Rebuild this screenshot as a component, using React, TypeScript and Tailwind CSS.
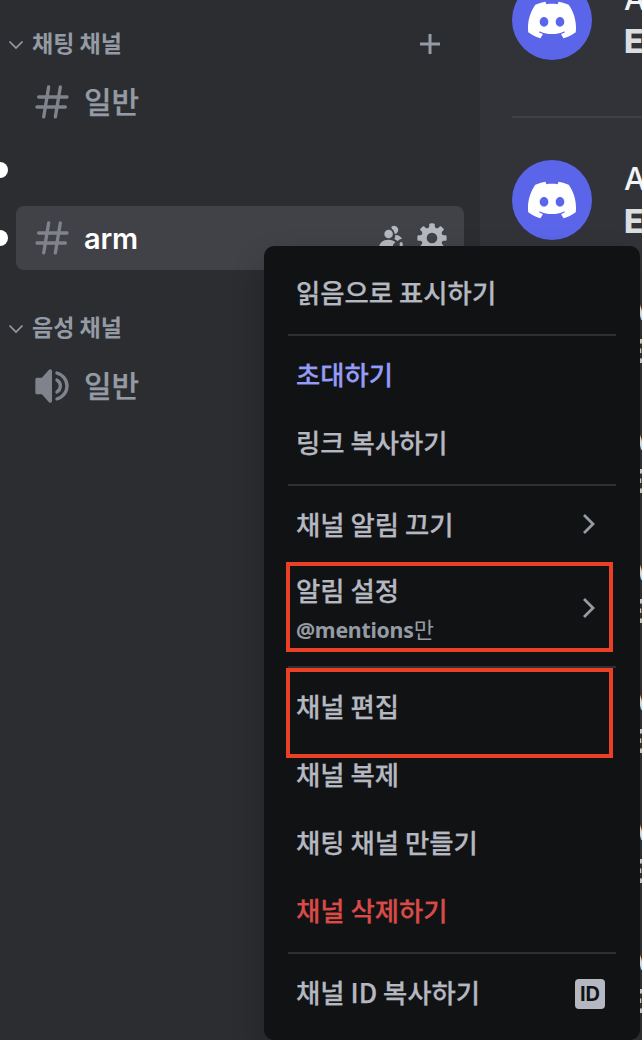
import React from "react";
import { SiDiscord } from "react-icons/si";

const KR = "font-['Noto_Sans_CJK_KR','Noto_Sans',sans-serif]";

function Hash() {
  return (
    <svg viewBox="0 0 24 24" className="size-10 shrink-0 fill-[#81838c]">
      <path
        fillRule="evenodd"
        d="M10.99 3.16A1 1 0 1 0 9 2.84L8.15 8H4a1 1 0 0 0 0 2h3.82l-.67 4H3a1 1 0 1 0 0 2h3.82l-.8 4.84a1 1 0 0 0 1.97.32L8.85 16h4.97l-.8 4.84a1 1 0 0 0 1.97.32l.86-5.16H20a1 1 0 1 0 0-2h-3.82l.67-4H21a1 1 0 1 0 0-2h-3.82l.8-4.84a1 1 0 1 0-1.97-.32L15.15 8h-4.97l.8-4.84ZM14.15 14l.67-4H9.85l-.67 4h4.97Z"
      />
    </svg>
  );
}

function Speaker() {
  return (
    <svg viewBox="0 0 24 24" className="size-10 shrink-0 fill-[#81838c]">
      <path d="M12 3a1 1 0 0 0-1-1h-.06a1 1 0 0 0-.74.32L5.92 7H3a1 1 0 0 0-1 1v8a1 1 0 0 0 1 1h2.92l4.28 4.68a1 1 0 0 0 .74.32H11a1 1 0 0 0 1-1V3ZM15.1 20.75c-.58.14-1.1-.33-1.1-.92v-.03c0-.5.37-.92.85-1.05a7 7 0 0 0 0-13.5A1.11 1.11 0 0 1 14 4.2v-.03c0-.6.52-1.06 1.1-.92a9 9 0 0 1 0 17.5Z" />
      <path d="M15.16 16.51c-.57.28-1.16-.2-1.16-.83v-.14c0-.43.28-.8.63-1.02a3 3 0 0 0 0-5.04c-.35-.23-.63-.6-.63-1.02v-.14c0-.63.59-1.1 1.16-.83a5 5 0 0 1 0 9.02Z" />
    </svg>
  );
}

function Gear() {
  return (
    <svg viewBox="0 0 24 24" className="size-8 shrink-0 fill-[#b5b8c0]">
      <path
        fillRule="evenodd"
        d="M10.56 1.1c-.46.05-.7.53-.64.98.18 1.16-.19 2.2-.98 2.53-.8.33-1.79-.15-2.49-1.1-.27-.36-.78-.52-1.14-.24-.77.59-1.45 1.27-2.04 2.04-.28.36-.12.87.24 1.14.96.7 1.43 1.7 1.1 2.49-.33.8-1.37 1.16-2.53.98-.45-.07-.93.18-.99.64a11.1 11.1 0 0 0 0 2.88c.06.46.54.7.99.64 1.16-.18 2.2.19 2.53.98.33.8-.14 1.79-1.1 2.49-.36.27-.52.78-.24 1.14.59.77 1.27 1.45 2.04 2.04.36.28.87.12 1.14-.24.7-.95 1.7-1.43 2.49-1.1.8.33 1.16 1.37.98 2.53-.07.45.18.93.64.99a11.1 11.1 0 0 0 2.88 0c.46-.06.7-.54.64-.99-.18-1.16.19-2.2.98-2.53.8-.33 1.79.14 2.49 1.1.27.36.78.52 1.14.24.77-.59 1.45-1.27 2.04-2.04.28-.36.12-.87-.24-1.14-.96-.7-1.43-1.7-1.1-2.49.33-.8 1.37-1.16 2.53-.98.45.07.93-.18.99-.64a11.1 11.1 0 0 0 0-2.88c-.06-.46-.54-.7-.99-.64-1.16.18-2.2-.19-2.53-.98-.33-.8.14-1.79 1.1-2.49.36-.27.52-.78.24-1.14a11.07 11.07 0 0 0-2.04-2.04c-.36-.28-.87-.12-1.14.24-.7.96-1.7 1.43-2.49 1.1-.8-.33-1.16-1.37-.98-2.53.07-.45-.18-.93-.64-.99a11.1 11.1 0 0 0-2.88 0ZM16 12a4 4 0 1 1-8 0 4 4 0 0 1 8 0Z"
      />
    </svg>
  );
}

function Invite() {
  return (
    <svg viewBox="0 0 32 32" className="size-8 shrink-0 fill-[#b5b8c0]">
      <circle cx="12.6" cy="12" r="4.3" />
      <path d="M15.6 4.8a4.1 4.1 0 1 1 3.4 7.2 1.2 1.2 0 0 1-.6-1.2 6.5 6.500 0 0 0-2.600-4.400 1.100 1.100 0 0 1-.2-1.600Z" />
      <path d="M19.2 13c2.800-.2 5.500 1.300 6.900 3.700-1.700.2-3.300 1-4.400 2.400l-3.400-2.100c.9-1.200 1.100-2.700.9-4Z" />
      <path d="M3 26c0-5 4-8.300 9.500-8.300 3 0 5.200 1 7 2.600-1.500.6-3 2.700-3 5.700H3Z" />
      <path d="M23.7 21.500a1.500 1.500 0 0 1 3 0V28h-3v-6.500Z" />
    </svg>
  );
}

function Category({ label, add }: { label: string; add?: boolean }) {
  return (
    <div className="flex h-12 items-center pr-9 pl-2 text-[#949ba4]">
      <svg viewBox="0 0 16 16" className="size-4 shrink-0" fill="none" stroke="currentColor" strokeWidth="1.7">
        <path d="M1.5 5.500l6.500 6.500L14.500 5.500" />
      </svg>
      <span className="mb-[5px] ml-2 text-[23px] leading-8 font-bold">{label}</span>
      {add && (
        <svg viewBox="0 0 28 28" className="ml-auto size-7" stroke="currentColor" strokeWidth="3">
          <path d="M14 4v20M4 14h20" />
        </svg>
      )}
    </div>
  );
}

function Message({ className }: { className: string }) {
  return (
    <div className={`flex shrink-0 pl-8 ${className}`}>
      <div className="flex size-20 shrink-0 items-center justify-center rounded-full bg-[#5b65ea]">
        <SiDiscord className="size-12 text-white" />
      </div>
      <div className="ml-8 font-['Inter',sans-serif]">
        <div className="h-10 text-[31px] leading-[37px] font-medium text-[#f2f3f5]">A</div>
        <div className="text-[32px] leading-[44px] font-extrabold text-[#dbdee1]">E</div>
      </div>
    </div>
  );
}

function Item({ label, color = "text-[#b5b8c0]", children }: { label: string; color?: string; children?: React.ReactNode }) {
  return (
    <div className={`flex h-[68px] items-center justify-between px-2 text-[26.4px] font-medium ${color}`}>
      <span className="mb-[5px] [-webkit-text-stroke:0.25px_currentColor]">{label}</span>
      {children}
    </div>
  );
}

function Chevron() {
  return (
    <svg viewBox="0 0 14 20" className="mr-3 mb-1 h-5 w-3.5 shrink-0" fill="none" stroke="#949ba4" strokeWidth="2.8">
      <path d="M2 1l9 9-9 9" />
    </svg>
  );
}

const Divider = () => <div className="my-[6px] h-0.5 bg-[#2e2f34]" />;

export default function App() {
  return (
    <div className={`relative flex h-[1040px] w-[642px] overflow-hidden bg-[#313338] ${KR}`}>
      <aside className="flex w-[480px] shrink-0 flex-col bg-[#2b2d31] pt-5">
        <Category label="채팅 채널" add />
        <div className="flex h-[68px] items-center pl-8 text-[30px] font-medium text-[#949ba4]">
          <Hash />
          <span className="mb-[5px] ml-3 leading-10 [-webkit-text-stroke:0.25px_currentColor]">일반</span>
        </div>
        <div className="flex h-[68px] items-center">
          <span className="h-4 w-2 rounded-r-lg bg-white" />
        </div>
        <div className="flex h-[68px] items-center">
          <span className="h-4 w-2 rounded-r-lg bg-white" />
          <div className="ml-2 flex h-16 w-[448px] items-center rounded-lg bg-[#414247] pl-4">
            <Hash />
            <span className="mt-0.5 ml-3 font-['Inter',sans-serif] text-[29px] font-semibold tracking-[-0.2px] text-white">arm</span>
            <div className="ml-auto flex gap-2 pr-4">
              <Invite />
              <Gear />
            </div>
          </div>
        </div>
        <div className="h-8" />
        <Category label="음성 채널" />
        <div className="flex h-[68px] items-center pl-8 text-[30px] font-medium text-[#949ba4]">
          <Speaker />
          <span className="mb-[5px] ml-3 leading-10 [-webkit-text-stroke:0.25px_currentColor]">일반</span>
        </div>
      </aside>

      <main className="flex w-[162px] shrink-0 flex-col overflow-hidden">
        <Message className="-mt-5 h-[136px]" />
        <div className="ml-8 h-0.5 shrink-0 bg-[#3f4147]" />
        <Message className="mt-[42px] h-[130px]" />
        <Message className="h-[130px]" />
        <Message className="h-[130px]" />
        <Message className="h-[130px]" />
        <Message className="h-[130px]" />
        <Message className="h-[130px]" />
        <Message className="h-[130px]" />
      </main>

      <div className="absolute top-[246px] left-[264px] h-[794px] w-[376px] rounded-[10px] bg-[#111214] px-6 pt-[14px] shadow-[0_16px_32px_rgba(0,0,0,0.24)]">
        <Item label="읽음으로 표시하기" />
        <Divider />
        <Item label="초대하기" color="text-[#949cf7]" />
        <Item label="링크 복사하기" />
        <Divider />
        <Item label="채널 알림 끄기">
          <Chevron />
        </Item>
        <div className="flex h-[100px] items-center justify-between px-2">
          <div>
            <div className="text-[26.4px] leading-9 font-medium text-[#b5b8c0] [-webkit-text-stroke:0.25px_currentColor]">알림 설정</div>
            <div className="pt-px text-[22px] leading-[39px] text-[#949ba4]">
              <span className="font-['Noto_Sans',sans-serif] text-[21.3px] font-bold tracking-[-0.25px]">@mentions</span>만
            </div>
          </div>
          <Chevron />
        </div>
        <Divider />
        <Item label="채널 편집" />
        <Item label="채널 복제" />
        <Item label="채팅 채널 만들기" />
        <Item label="채널 삭제하기" color="text-[#da4b48]" />
        <Divider />
        <Item label="채널 ID 복사하기">
          <span className="mr-[3px] flex size-[30px] items-center justify-center rounded bg-[#b5b8c0] font-['Inter',sans-serif] text-[20px] leading-none font-bold text-[#111214]">
            ID
          </span>
        </Item>
      </div>

      <div className="absolute top-[562px] left-[286px] h-[90px] w-[327px] border-4 border-[#ea4025]" />
      <div className="absolute top-[668px] left-[286px] h-[90px] w-[327px] border-4 border-[#ea4025]" />
    </div>
  );
}
